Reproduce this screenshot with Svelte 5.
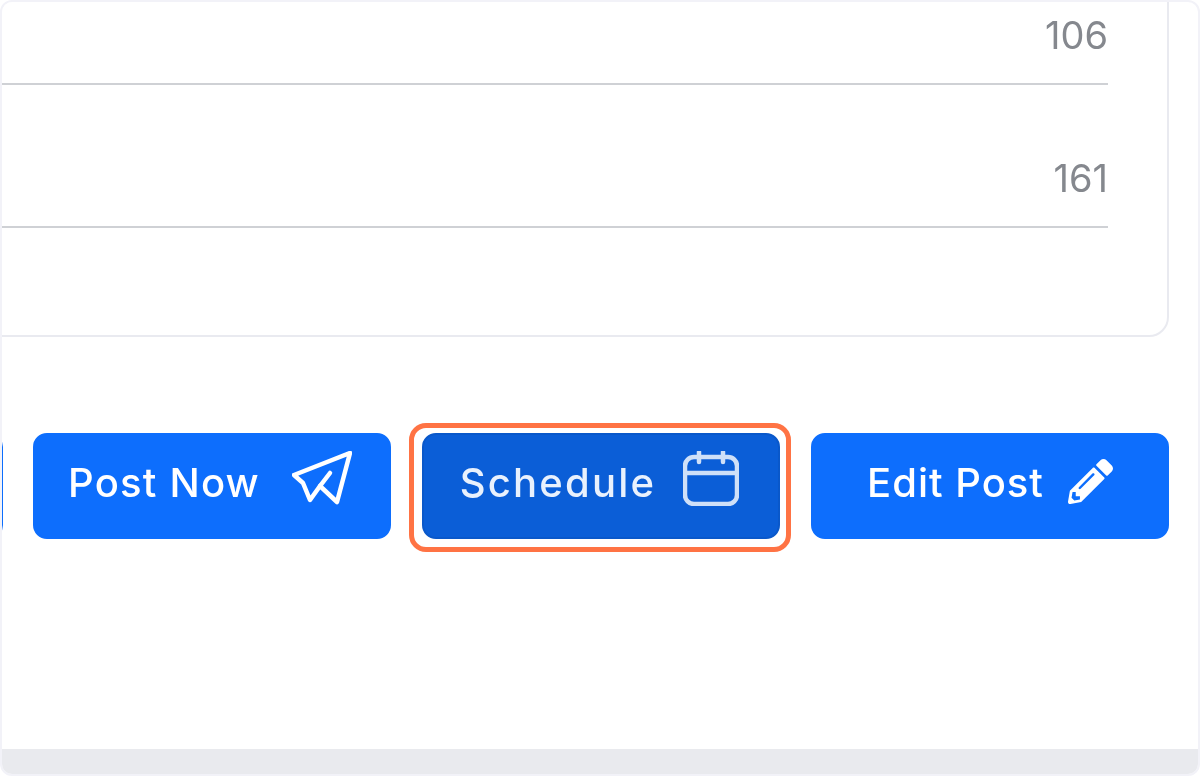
<script>
  const rows = ['106', '161'];
</script>

<div class="frame">
  <main class="main">
    <section class="card">
      {#each rows as value}
        <div class="row">{value}</div>
      {/each}
    </section>

    <div class="actions">
      <button class="btn ghost" aria-hidden="true" tabindex="-1"></button>

      <button class="btn post">
        <span>Post Now</span>
        <svg class="icon plane" viewBox="0 0 60 54" width="60" height="54" fill="none" stroke="currentColor" stroke-width="4.5" stroke-linejoin="round" stroke-linecap="round">
          <path d="M58 2 L2 24 L11 32 L18 49 L28 35 L45 51 Z" />
          <path d="M28 35 L38 22" />
        </svg>
      </button>

      <div class="spot">
        <button class="btn active">
          <span>Schedule</span>
          <svg class="icon calendar" viewBox="0 0 56 55" width="56" height="55" fill="none" stroke="currentColor" stroke-width="4.5" stroke-linecap="round">
            <rect x="2" y="6" width="52" height="47" rx="9" />
            <path d="M2 22 H54 M16 1 V11 M40 1 V11" />
          </svg>
        </button>
        <span class="ring"></span>
      </div>

      <button class="btn edit">
        <span>Edit Post</span>
        <svg class="icon pencil" viewBox="0 0 512 512" width="45" height="45" fill="currentColor">
          <path d="M497.9 142.1l-46.1 46.1c-4.7 4.7-12.3 4.7-17 0l-111-111c-4.7-4.7-4.7-12.3 0-17l46.1-46.1c18.7-18.7 49.1-18.7 67.9 0l60.1 60.1c18.8 18.7 18.8 49.1 0 67.9zM284.2 99.8L21.6 362.4.4 483.9c-2.9 16.4 11.4 30.6 27.8 27.8l121.5-21.3 262.6-262.6c4.7-4.7 4.7-12.3 0-17l-111-111c-4.8-4.7-12.4-4.7-17.1 0zM124.1 339.9c-5.5-5.5-5.5-14.3 0-19.8l154-154c5.5-5.5 14.3-5.5 19.8 0s5.5 14.3 0 19.8l-154 154c-5.5 5.5-14.3 5.5-19.8 0zM88 424h48v36.3l-64.5 11.3-31.1-31.1L51.7 376H88v48z" />
        </svg>
      </button>
    </div>
  </main>
  <footer class="band"></footer>
</div>

<style>
  :global(body) {
    margin: 0;
    background: #ffffff;
  }

  .frame {
    box-sizing: border-box;
    width: 1200px;
    height: 776px;
    display: flex;
    flex-direction: column;
    overflow: hidden;
    background: #ffffff;
    border: 2px solid #f2f2f8;
    border-radius: 12px;
    font-family: Inter, "Open Sans", sans-serif;
  }

  .main {
    flex: 1;
    min-height: 0;
    padding-right: 29px;
  }

  .card {
    margin: -62px 0 0 -20px;
    padding: 0 59px 107px 0;
    background: #ffffff;
    border: 2px solid #e9eaf0;
    border-radius: 20px;
    filter: blur(0.5px);
  }

  .row {
    box-sizing: border-box;
    height: 143px;
    display: flex;
    align-items: flex-end;
    justify-content: flex-end;
    padding-bottom: 29px;
    border-bottom: 2px solid #cfd1d5;
    color: #85888e;
    font-size: 38px;
    line-height: 38px;
  }

  .band {
    flex: none;
    height: 25px;
    background: #e9eaee;
  }

  .actions {
    display: flex;
    justify-content: flex-end;
    gap: 31px;
    margin-top: 96px;
  }

  .btn {
    box-sizing: border-box;
    flex: none;
    width: 358px;
    height: 106px;
    display: flex;
    align-items: center;
    justify-content: center;
    gap: 27px;
    padding: 0 0 8px;
    background: #0d6efd;
    border: 2px solid #0d6efd;
    border-radius: 14px;
    color: #ffffff;
    font: inherit;
    font-size: 40px;
    font-weight: 500;
    letter-spacing: 1.2px;
    filter: blur(0.5px);
  }

  .ghost {
    margin-right: -1px;
  }

  .post {
    gap: 32px;
    padding-right: 4px;
  }

  .edit {
    gap: 24px;
    letter-spacing: 1px;
  }

  .active {
    background: #0b5ed7;
    border-color: #0a58ca;
    color: #e9f1fd;
    padding-right: 3px;
    letter-spacing: 2.2px;
  }

  .spot {
    position: relative;
    flex: none;
  }

  .ring {
    position: absolute;
    inset: -10px -11px -13px -13px;
    border: 5.5px solid #ff7344;
    border-radius: 17px;
    pointer-events: none;
  }

  .icon {
    flex: none;
    display: block;
  }

  .plane,
  .calendar {
    margin-bottom: 8px;
  }

  .pencil {
    margin-bottom: 2px;
  }

  .calendar {
    color: #cfe0f8;
  }
</style>
